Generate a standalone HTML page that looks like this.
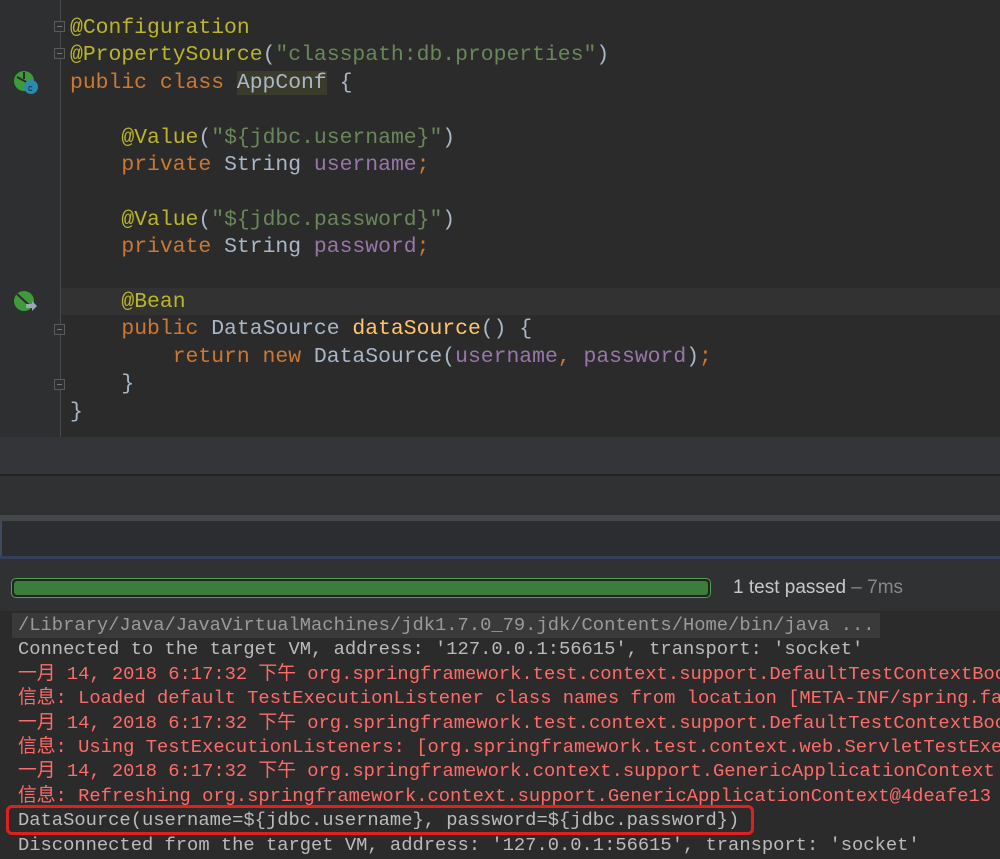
<!DOCTYPE html>
<html><head><meta charset="utf-8"><style>
body{margin:0;width:1000px;height:859px;overflow:hidden;background:#2b2b2b;position:relative;font-family:"Liberation Mono",monospace}
.ed{position:absolute;left:0;top:0;width:1000px;height:437px;background:#2b2b2b}
.gut{position:absolute;left:0;top:0;width:60px;height:437px;background:#2d2f31;border-right:1px solid #4a4a4a}
.cur{position:absolute;left:61px;top:288px;width:939px;height:27px;background:#323232}
.code{position:absolute;left:70px;top:15px;font-size:21.4px;line-height:27.4px;color:#a9b7c6;white-space:pre}
.a{color:#bbb529}.s{color:#6a8759}.k{color:#cc7832}.f{color:#9876aa}.m{color:#ffc66d}
.hl{background:#3b3b2c}
.clip{position:absolute;left:0;top:611px;width:1000px;height:248px;overflow:hidden}
.con{position:absolute;left:18px;top:2px;font-size:18.8px;line-height:24.4px;color:#bbbbbb;white-space:pre;font-family:"Liberation Mono","Noto Sans CJK SC",monospace}
.r{color:#ff6b68}
.fold{position:absolute;left:54px;width:11px;height:11px;border:1px solid #5a5a5a;background:#2d2f31;box-sizing:border-box}
.fold:after{content:"";position:absolute;left:2px;top:4px;width:5px;height:1px;background:#777}
</style></head><body>
<div class="ed"></div>
<div class="gut"></div>
<div class="cur"></div>
<div class="fold" style="top:21px"></div>
<div class="fold" style="top:48px"></div>
<div class="fold" style="top:324px"></div>
<div class="fold" style="top:379px"></div>
<svg style="position:absolute;left:12px;top:70px" width="28" height="26"><circle cx="12" cy="11" r="10" fill="#3f9a3a"/><path d="M5 7 L18 14 M12 2 L12 9" stroke="#2b2b2b" stroke-width="2"/><circle cx="19" cy="17" r="7" fill="#2a8ab0"/><text x="16" y="21" font-size="9" fill="#222" font-family="Liberation Sans">c</text></svg>
<svg style="position:absolute;left:12px;top:290px" width="28" height="26"><circle cx="12" cy="11" r="10" fill="#3f9a3a"/><path d="M5 4 L19 17" stroke="#2b2b2b" stroke-width="2"/><path d="M14 14 h6 v-3 l5 5 -5 5 v-3 h-6z" fill="#9aa7b6"/></svg>
<div class="code"><span class="a">@Configuration</span>
<span class="a">@PropertySource</span>(<span class="s">"classpath:db.properties"</span>)
<span class="k">public class </span><span class="hl">AppConf</span> {

    <span class="a">@Value</span>(<span class="s">"${jdbc.username}"</span>)
    <span class="k">private </span>String <span class="f">username</span><span class="k">;</span>

    <span class="a">@Value</span>(<span class="s">"${jdbc.password}"</span>)
    <span class="k">private </span>String <span class="f">password</span><span class="k">;</span>

    <span class="a">@Bean</span>
    <span class="k">public </span>DataSource <span class="m">dataSource</span>() {
        <span class="k">return new </span>DataSource(<span class="f">username</span><span class="k">, </span><span class="f">password</span>)<span class="k">;</span>
    }
}</div>
<div style="position:absolute;left:0;top:437px;width:1000px;height:37px;background:#333538"></div>
<div style="position:absolute;left:0;top:474px;width:1000px;height:2px;background:#232323"></div>
<div style="position:absolute;left:0;top:476px;width:1000px;height:39px;background:#2f3133"></div>
<div style="position:absolute;left:0;top:515px;width:1000px;height:6px;background:#45484b"></div>
<div style="position:absolute;left:0;top:521px;width:1000px;height:35px;background:#2b2d30;border-left:2px solid #3e4a5e;box-sizing:border-box"></div>
<div style="position:absolute;left:0;top:556px;width:1000px;height:3px;background:#34405a"></div>
<div style="position:absolute;left:0;top:559px;width:1000px;height:52px;background:#2f3133"></div>
<div style="position:absolute;left:11px;top:578px;width:700px;height:20px;border:1px solid #4aa34a;border-radius:5px;box-sizing:border-box;background:#232323;padding:2px"><div style="width:100%;height:100%;background:#3c7d3c;border-radius:3px"></div></div>
<div style="position:absolute;left:733px;top:577px;font-family:'Liberation Sans',sans-serif;font-size:19px;color:#c8c8c8">1 test passed <span style="color:#888">– 7ms</span></div>
<div class="clip">
<div style="position:absolute;left:12px;top:2px;width:868px;height:25px;background:#3a3a3a"></div>
<div class="con"><span style="color:#9a9a9a">/Library/Java/JavaVirtualMachines/jdk1.7.0_79.jdk/Contents/Home/bin/java ...</span>
Connected to the target VM, address: '127.0.0.1:56615', transport: 'socket'
<span class="r">一月 14, 2018 6:17:32 下午 org.springframework.test.context.support.DefaultTestContextBootstrapper</span>
<span class="r">信息: Loaded default TestExecutionListener class names from location [META-INF/spring.factories]</span>
<span class="r">一月 14, 2018 6:17:32 下午 org.springframework.test.context.support.DefaultTestContextBootstrapper</span>
<span class="r">信息: Using TestExecutionListeners: [org.springframework.test.context.web.ServletTestExecution</span>
<span class="r">一月 14, 2018 6:17:32 下午 org.springframework.context.support.GenericApplicationContext</span>
<span class="r">信息: Refreshing org.springframework.context.support.GenericApplicationContext@4deafe13</span>
DataSource(username=${jdbc.username}, password=${jdbc.password})
Disconnected from the target VM, address: '127.0.0.1:56615', transport: 'socket'</div>
</div>
<div style="position:absolute;left:6px;top:805px;width:748px;height:30px;border:3px solid #e0201e;border-radius:6px;box-sizing:border-box"></div>
</body></html>
